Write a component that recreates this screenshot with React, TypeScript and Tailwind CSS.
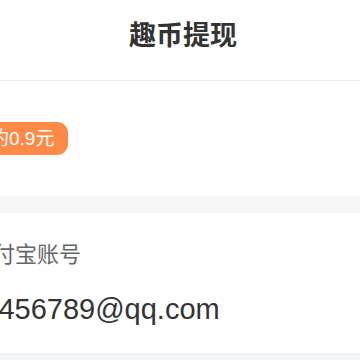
import React from "react";

export default function App() {
  return (
    <div
      className="w-[360px] h-[360px] overflow-hidden bg-[#f5f6f8]"
      style={{ fontFamily: '"Liberation Sans", "Noto Sans CJK SC", sans-serif' }}
    >
      <header className="h-[81px] bg-white border-b border-[#eeeeee] flex items-center justify-center pb-[8px] pl-[6px]">
        <h1 className="text-[27px] font-bold text-[#333333] leading-none">趣币提现</h1>
      </header>
      <section className="h-[115px] bg-white flex items-center">
        <div className="-ml-[30px] h-[33px] pl-[20px] pr-[14px] rounded-r-[11px] bg-[#ff8a48] flex items-center">
          <span className="text-[19px] text-white leading-none">约0.9元</span>
        </div>
      </section>
      <div className="h-[17px]" />
      <section className="h-[140px] bg-white flex flex-col">
        <div className="-ml-[29px] mt-[31px] text-[22px] text-[#666666] leading-none h-[22px] whitespace-nowrap">支付宝账号</div>
        <div className="-ml-[50px] mt-[29px] text-[29px] text-[#333333] leading-none whitespace-nowrap">123456789@qq.com</div>
      </section>
    </div>
  );
}
